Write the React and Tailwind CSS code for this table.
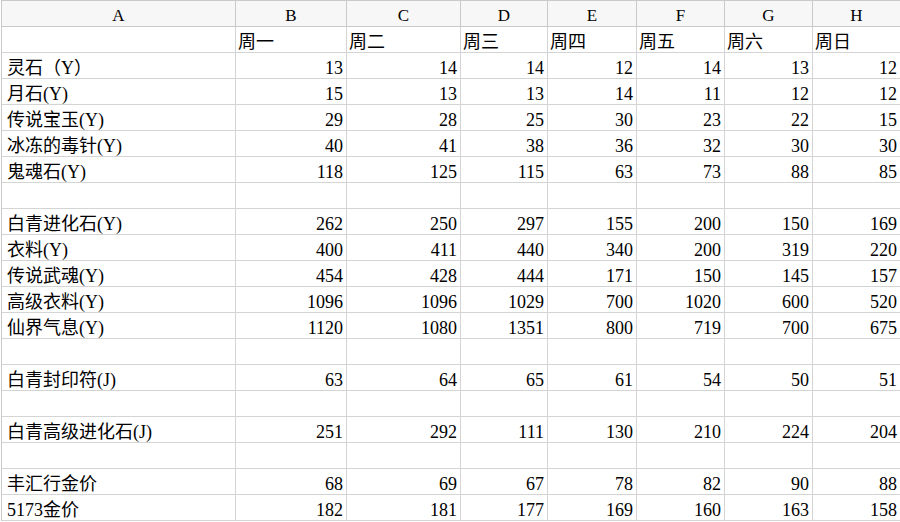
const cols = ['A', 'B', 'C', 'D', 'E', 'F', 'G', 'H'];
const days = ['周一', '周二', '周三', '周四', '周五', '周六', '周日'];

const rows = [
  ['灵石（Y）', 13, 14, 14, 12, 14, 13, 12],
  ['月石(Y)', 15, 13, 13, 14, 11, 12, 12],
  ['传说宝玉(Y)', 29, 28, 25, 30, 23, 22, 15],
  ['冰冻的毒针(Y)', 40, 41, 38, 36, 32, 30, 30],
  ['鬼魂石(Y)', 118, 125, 115, 63, 73, 88, 85],
  null,
  ['白青进化石(Y)', 262, 250, 297, 155, 200, 150, 169],
  ['衣料(Y)', 400, 411, 440, 340, 200, 319, 220],
  ['传说武魂(Y)', 454, 428, 444, 171, 150, 145, 157],
  ['高级衣料(Y)', 1096, 1096, 1029, 700, 1020, 600, 520],
  ['仙界气息(Y)', 1120, 1080, 1351, 800, 719, 700, 675],
  null,
  ['白青封印符(J)', 63, 64, 65, 61, 54, 50, 51],
  null,
  ['白青高级进化石(J)', 251, 292, 111, 130, 210, 224, 204],
  null,
  ['丰汇行金价', 68, 69, 67, 78, 82, 90, 88],
  ['5173金价', 182, 181, 177, 169, 160, 163, 158],
];

const grid = 'grid grid-cols-[234px_111px_114px_87px_89px_88px_88px_88px]';

function Row({ cells, header }) {
  return (
    <div className={grid}>
      {cells.map((c, i) => (
        <div
          key={i}
          className={
            'h-[26px] border-r border-b flex items-center pt-[4px] ' +
            (header
              ? 'border-[#cacaca] bg-[#f7f7f7] justify-center text-[17px]'
              : 'border-[#d4d4d4] ' +
                (i === 0 ? 'pl-[5px]' : typeof c === 'number' ? 'justify-end pr-[3px]' : 'pl-[2px]'))
          }
        >
          {c}
        </div>
      ))}
    </div>
  );
}

export default function App() {
  return (
    <div className="w-[900px] h-[522px] overflow-hidden bg-white text-black text-[18px] leading-none font-['Liberation_Serif','Noto_Sans_CJK_SC',serif]">
      <div className="ml-px border-l border-t border-[#cacaca]">
        <Row cells={cols} header />
        <Row cells={['', ...days]} />
        {rows.map((r, i) => (
          <Row key={i} cells={r || ['', '', '', '', '', '', '', '']} />
        ))}
      </div>
    </div>
  );
}
